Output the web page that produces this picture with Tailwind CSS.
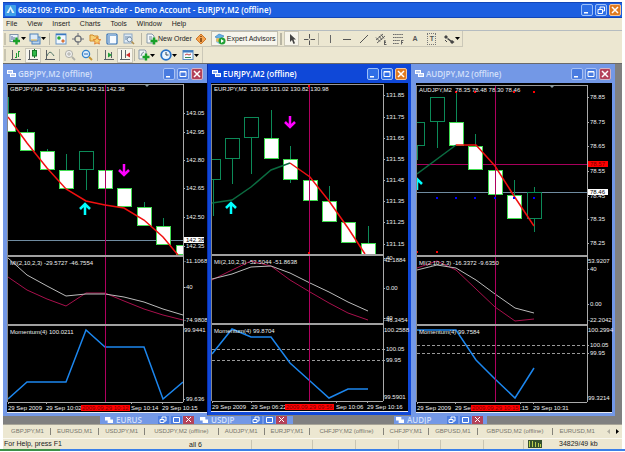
<!DOCTYPE html>
<html lang="en">
<head>
  <meta charset="UTF-8">
  <title>6682109: FXDD - MetaTrader - Demo Account - EURJPY,M2 (offline)</title>
  <meta name="viewport" content="width=device-width, initial-scale=1.0">
  <script src="https://cdn.jsdelivr.net/npm/@tailwindcss/browser@4"></script>
</head>
<body class="bg-white font-['Liberation_Sans',Arial,sans-serif] text-[7px] leading-[10px] text-[#222] overflow-hidden">
  <div class="flex flex-col pt-[2px] pl-[3px] pr-[3px]">

    <!-- title bar -->
    <header class="flex items-center h-4 bg-[#1d5fe0] border-y border-[#1246b8] pl-[2px] pr-px">
      <svg class="w-[11px] h-[11px]" viewBox="0 0 11 11"><rect width="11" height="11" rx="1" fill="#3fa0e8"/><path d="M5.5 1 9.5 8h-8z" fill="#dff2ff"/><path d="M5.5 4 7 8H4z" fill="#3a8ad8"/></svg>
      <h1 class="ml-[2px] grow font-['Open_Sans',sans-serif] font-semibold text-[8px] text-white whitespace-nowrap">6682109: FXDD - MetaTrader - Demo Account - EURJPY,M2 (offline)</h1>
      <div class="flex gap-[2px]">
        <button aria-label="Minimize" class="w-3 h-3 rounded-xs border border-[#9dc0f8] bg-[#2f6fe6]"><svg viewBox="0 0 10 10"><path d="M2 7h4v1.500H2z" fill="#fff"/></svg></button>
        <button aria-label="Restore" class="w-3 h-3 rounded-xs border border-[#9dc0f8] bg-[#2f6fe6]"><svg viewBox="0 0 10 10" fill="none" stroke="#fff"><path d="M4 4V2h4.500v4H7M2 4.500h4.500v4H2z"/></svg></button>
        <button aria-label="Close" class="w-3 h-3 rounded-xs border border-[#f4c79c] bg-[#e07a20]"><svg viewBox="0 0 10 10" stroke="#fff" stroke-width="1.500"><path d="M2 2l6 6M8 2 2 8"/></svg></button>
      </div>
    </header>

    <!-- menu -->
    <nav class="flex items-center gap-[10px] h-3 pl-[3px] bg-[#ece7d1]">
      <a href="#">File</a><a href="#">View</a><a href="#">Insert</a><a href="#">Charts</a><a href="#">Tools</a><a href="#">Window</a><a href="#">Help</a>
    </nav>

    <div class="bg-[#ece7d1] border-t border-[#b5bcc0]">
      <!-- standard toolbar + line studies -->
      <div class="flex items-center h-4 w-max border-r border-b border-[#cbc8b8]">
        <span class="w-[2px] h-3 mx-px border-x border-[#c8c4b0]"></span>
        <button aria-label="New chart" class="flex items-center w-5 pl-[2px]">
          <svg class="w-3 h-3" viewBox="0 0 12 12"><rect x="1" y="1.500" width="8" height="7" fill="#eaf4fb" stroke="#7d93a8"/><path d="M3 3v4M5 4v3" stroke="#569"/><path d="M7.500 4.500v7M4 8h7" stroke="#18a028" stroke-width="2.400"/></svg>
          <svg class="w-[5px] h-[3px]" viewBox="0 0 5 3"><path d="M0 0h5L2.500 3z"/></svg>
        </button>
        <button aria-label="Profiles" class="flex items-center w-5 pl-[2px]">
          <svg class="w-3 h-3" viewBox="0 0 12 12"><rect x="3" y="4" width="8" height="7" fill="#b8d4f0" stroke="#4f81b8"/><rect x="1" y="1" width="8" height="7" fill="#dceaf8" stroke="#4f81b8"/><path d="M2 7h6" stroke="#e0b040"/></svg>
          <svg class="w-[5px] h-[3px]" viewBox="0 0 5 3"><path d="M0 0h5L2.500 3z"/></svg>
        </button>
        <span class="w-px h-3 mx-[2px] bg-[#b8b5a4]"></span>
        <button aria-label="Market Watch" class="flex justify-center w-[17px]"><svg class="w-3 h-3" viewBox="0 0 12 12"><rect x="1" y="1" width="10" height="10" fill="#f2f8ff" stroke="#6a97c8"/><path d="M1 1.500h10" stroke="#3b78c0" stroke-width="1.500"/><circle cx="4" cy="5" r="1.800" fill="#27a535"/><path d="M8 6l2 2-2 2-2-2z" fill="#d8743a"/></svg></button>
        <button aria-label="Data Window" class="flex justify-center w-[17px]"><svg class="w-3 h-3" viewBox="0 0 12 12" fill="none" stroke="#6c7078"><circle cx="6" cy="6" r="3.200" stroke-width="1.200"/><path d="M6 0v4M6 8v4M0 6h4M8 6h4"/></svg></button>
        <button aria-label="Navigator" class="flex justify-center w-[17px]"><svg class="w-3 h-3" viewBox="0 0 12 12"><path d="M1 2h3l1 1h4v5H1z" fill="#f6cf76" stroke="#d08a28"/><path d="M8 4l1.200 2.400 2.600.3-1.900 1.800.5 2.600L8 9.900l-2.400 1.200.5-2.600-1.900-1.800 2.600-.3z" fill="#f8d070" stroke="#dc7020" stroke-width=".8"/></svg></button>
        <button aria-label="Terminal" class="flex justify-center w-[17px]"><svg class="w-3 h-3" viewBox="0 0 12 12"><rect x="1" y="1" width="10" height="10" rx="1" fill="#f7fbff" stroke="#2f6eb4" stroke-width="1.200"/><path d="M3 2v8" stroke="#2f6eb4"/><path d="M4 2.500h6" stroke="#8bb4dc"/></svg></button>
        <button aria-label="Strategy Tester" class="flex justify-center w-[17px]"><svg class="w-3 h-3" viewBox="0 0 12 12" fill="none"><rect x="1" y="1" width="8" height="9" fill="#dfeaf4" stroke="#8ca8c4"/><path d="M3 3v4M5 3v3M7 3v2" stroke="#6688a8"/><circle cx="6.500" cy="6.500" r="2.300" fill="#e8f4ff" stroke="#8095ac"/><path d="M8.500 8.500 11 11" stroke="#b09050" stroke-width="1.600"/></svg></button>
        <span class="w-px h-3 mx-[4px] bg-[#b8b5a4]"></span>
        <button class="flex items-center whitespace-nowrap">
          <svg class="w-3 h-3" viewBox="0 0 12 12"><path d="M1 1h5l2 2v7H1z" fill="#f4f8fa" stroke="#8798a8"/><path d="M3 4h3M3 6h3" stroke="#789"/><path d="M8 4.500v7M4.500 8h7" stroke="#18a028" stroke-width="2.600"/></svg>
          New Order</button>
        <button aria-label="MetaEditor" class="flex justify-center w-[18px]"><svg class="w-3 h-3" viewBox="0 0 12 12"><path d="M6 1l5 5-5 5-5-5z" fill="#f3a552" stroke="#d0782a"/><path d="M6 3v1M6 5v4" stroke="#7a3c08" stroke-width="1.500"/></svg></button>
        <button class="flex items-center gap-px h-[15px] px-[2px] ml-px bg-[#f7f5ec] border border-[#c2bfb0] whitespace-nowrap">
          <svg class="w-3 h-3" viewBox="0 0 12 12"><path d="M1 4 5 1l5 2-4 3z" fill="#69b1e6" stroke="#2c78b8" stroke-width=".6"/><path d="M2 5v4l3 2V6z" fill="#8cc8ee"/><circle cx="4" cy="7" r="2" fill="#e8b858"/><circle cx="8" cy="8" r="3.500" fill="#20a034"/><path d="M7 6l3 2-3 2z" fill="#fff"/></svg>
          Expert Advisors</button>
        <span class="w-[2px] h-3 mx-[2px] border-x border-[#b8b5a4]"></span>
        <button aria-label="Cursor" class="flex justify-center w-[15px] h-[15px] items-center bg-[#f7f5ec] border border-[#cbc8b8]"><svg class="w-3 h-3" viewBox="0 0 12 12"><path d="M4 1v8l2-2 1.500 4 1.500-.7L7.500 6.500H10z" fill="#444"/></svg></button>
        <button aria-label="Crosshair" class="flex justify-center w-[19px]"><svg class="w-3 h-3" viewBox="0 0 12 12"><path d="M6.500 1v4.500m0 2V12M1 6.500h4.500m2 0H12" stroke="#555"/></svg></button>
        <span class="w-px h-3 mr-[2px] bg-[#b8b5a4]"></span>
        <button aria-label="Vertical line" class="flex justify-center w-[17px]"><svg class="w-3 h-3" viewBox="0 0 12 12"><path d="M6.500 2v8" stroke="#666"/></svg></button>
        <button aria-label="Horizontal line" class="flex justify-center w-[17px]"><svg class="w-3 h-3" viewBox="0 0 12 12"><path d="M2 6.500h8" stroke="#555"/></svg></button>
        <button aria-label="Trendline" class="flex justify-center w-[17px]"><svg class="w-3 h-3" viewBox="0 0 12 12"><path d="M2 10l8-8" stroke="#555"/></svg></button>
        <button aria-label="Equidistant channel" class="flex justify-center w-[17px]"><svg class="w-3 h-3" viewBox="0 0 12 12" fill="none" stroke="#555"><path d="M1 7l7-6M2 10l8-7M1 4.500l4 4M4 3l3 4M6 1.500l3 4M9.500 7.500v4M9 8h2M9 9.500h2M9 11.500h2.500" stroke-width=".9"/></svg></button>
        <button aria-label="Fibonacci" class="flex justify-center w-[17px]"><svg class="w-3 h-3" viewBox="0 0 12 12" stroke="#666" fill="none"><path d="M1 1.500h10M1 4.500h10M1 7.500h7M1 10.500h6" stroke-dasharray="1.500 .6"/><path d="M9.500 7v4.500M9.500 7.500h2M9.500 9.500H11"/></svg></button>
        <button aria-label="Text" class="w-[17px] font-bold text-[#555]">A</button>
        <button aria-label="Text label" class="w-[17px] flex justify-center"><span class="w-[9px] border border-dotted border-[#777] text-[#555] font-bold">T</span></button>
        <button aria-label="Arrows" class="flex items-center w-[22px] pl-[3px]">
          <svg class="w-3 h-3" viewBox="0 0 12 12" fill="#444"><path d="M1 4l2-2 2 2-2 2zM5 5l4 3-1 1-4-3zM7 9l2-2 2.500 2L9 11z"/><path d="M2 7l2 2" stroke="#444"/></svg>
          <svg class="w-[5px] h-[3px]" viewBox="0 0 5 3"><path d="M0 0h5L2.500 3z"/></svg>
        </button>
      </div>

      <!-- chart toolbar -->
      <div class="flex items-center h-4 w-max border-r border-[#cbc8b8]">
        <span class="w-[2px] h-3 mx-px border-x border-[#c8c4b0]"></span>
        <button aria-label="Bar chart" class="flex justify-center w-[18px]"><svg class="w-3 h-3" viewBox="0 0 12 12" fill="none" stroke="#5a5f64"><path d="M2.500 1v9.500H11M1 10.500h2"/><path d="M6.500 4v5M5 8.500h1.500M8.500 2v6M8.500 2.500H10" stroke="#1c9a34"/></svg></button>
        <button aria-label="Candlesticks" class="flex justify-center items-center w-[16px] h-[15px] bg-[#f7f5ec] border border-[#cbc8b8]"><svg class="w-3 h-3" viewBox="0 0 12 12" fill="none" stroke="#5a5f64"><path d="M2.500 1v9.500H11M1 10.500h2"/><path d="M7.500 0v9" stroke="#157a28"/><rect x="5.500" y="1.500" width="4" height="5.500" fill="#30b848" stroke="#157a28"/></svg></button>
        <button aria-label="Line chart" class="flex justify-center w-[17px]"><svg class="w-3 h-3" viewBox="0 0 12 12" fill="none" stroke="#5a5f64"><path d="M2.500 1v9.500H11M1 10.500h2"/><path d="M3 7q2-5 4-3.500T10 7" stroke="#55786a"/></svg></button>
        <span class="w-px h-3 mx-px bg-[#b8b5a4]"></span>
        <button aria-label="Zoom in" class="flex justify-center w-[17px]"><svg class="w-3 h-3" viewBox="0 0 12 12" fill="none" stroke="#b0b0a8"><circle cx="5" cy="5" r="3.600" fill="#eee"/><path d="M3 5h4M5 3v4"/><path d="M8 8l3 3" stroke-width="1.800"/></svg></button>
        <button aria-label="Zoom out" class="flex justify-center w-[17px]"><svg class="w-3 h-3" viewBox="0 0 12 12" fill="none"><circle cx="5" cy="5" r="3.600" fill="#dff0ff" stroke="#3484cc" stroke-width="1.300"/><path d="M3 5h4" stroke="#2868b0"/><path d="M8 8l3 3" stroke="#c89838" stroke-width="2"/></svg></button>
        <span class="w-px h-3 mx-[2px] bg-[#b8b5a4]"></span>
        <button aria-label="Auto scroll" class="flex justify-center w-[17px]"><svg class="w-3 h-3" viewBox="0 0 12 12" fill="none" stroke="#5a5f64"><path d="M2.500 1v9.500H11M1 10.500h2M8.500 3v6"/><path d="M5 3.500l4 2.500-4 2.500z" fill="#22a03a" stroke="none"/></svg></button>
        <button aria-label="Chart shift" class="flex justify-center items-center w-[16px] h-[15px] bg-[#f7f5ec] border border-[#cbc8b8]"><svg class="w-3 h-3" viewBox="0 0 12 12" fill="none" stroke="#5a5f64"><path d="M2.500 1v9.500H11M1 10.500h2M6.500 1v8"/><path d="M11 3.500v5L7 6z" fill="#d02828" stroke="none"/></svg></button>
        <span class="w-px h-3 mx-px bg-[#b8b5a4]"></span>
        <button aria-label="Indicators" class="flex items-center w-[22px] pl-[2px]">
          <svg class="w-3 h-3" viewBox="0 0 12 12"><path d="M1 1h6l1 1v8H1z" fill="#f0f4f6" stroke="#8798a8"/><path d="M3 7q1-4 3-4" stroke="#789" fill="none"/><path d="M8 4.500v7M4.500 8h7" stroke="#18a028" stroke-width="2.400"/></svg>
          <svg class="w-[5px] h-[3px]" viewBox="0 0 5 3"><path d="M0 0h5L2.500 3z"/></svg>
        </button>
        <button aria-label="Periods" class="flex items-center w-[22px] pl-[2px]">
          <svg class="w-3 h-3" viewBox="0 0 12 12" fill="none"><circle cx="6" cy="6" r="4.800" fill="#eaf5ff" stroke="#2772c8" stroke-width="1.800"/><path d="M6 3v3h2.500" stroke="#345"/></svg>
          <svg class="w-[5px] h-[3px]" viewBox="0 0 5 3"><path d="M0 0h5L2.500 3z"/></svg>
        </button>
        <button aria-label="Templates" class="flex items-center w-[22px] pl-[2px]">
          <svg class="w-3 h-3" viewBox="0 0 12 12" fill="none"><rect x="1" y="1.500" width="10" height="9" fill="#f4faff" stroke="#5a8cc0"/><path d="M1 2.500h10" stroke="#3f7cc0" stroke-width="2"/><path d="M3 6l2-1 2 1 2-1" stroke="#c04040"/><path d="M3 8.500h6" stroke="#3a8a50"/></svg>
          <svg class="w-[5px] h-[3px]" viewBox="0 0 5 3"><path d="M0 0h5L2.500 3z"/></svg>
        </button>
      </div>
    </div>

    <!-- MDI workspace -->
    <main class="bg-[#808080] border-t border-[#6a6a6a] pr-[7px]">
      <div class="grid grid-cols-3 items-start">
        <section class="bg-[#7398e6] pl-1 pb-[3px]">
          <div class="flex items-center h-[19px] text-[#d4e0fa] pr-1">
            <svg class="w-[9px] h-[9px]" viewBox="0 0 9 9"><path d="M0 1h6v4H0zM3 4h6v4H3z" fill="#fff"/><path d="M1 3h4M4 6h4" stroke="#7398e6"/></svg>
            <h2 class="ml-[2px] grow font-['Open_Sans',sans-serif] font-semibold text-[8px]">GBPJPY,M2 (offline)</h2>
            <div class="flex gap-[2px]">
              <button aria-label="Minimize" class="w-3 h-3 rounded-xs border border-[#a9c2f4] bg-[#4a7ce0]"><svg viewBox="0 0 10 10"><path d="M2 7h4v1.500H2z" fill="#fff"/></svg></button>
              <button aria-label="Maximize" class="w-3 h-3 rounded-xs border border-[#a9c2f4] bg-[#4a7ce0]"><svg viewBox="0 0 10 10" fill="none" stroke="#fff"><path d="M2 2.500h6v5H2zM2 3h6"/></svg></button>
              <button aria-label="Close" class="w-3 h-3 rounded-xs border border-[#d4b4c4] bg-[#b4425a]"><svg viewBox="0 0 10 10" stroke="#fff" stroke-width="1.500"><path d="M2 2l6 6M8 2 2 8"/></svg></button>
            </div>
          </div>
          <svg id="gbpjpy" class="block w-full overflow-visible" viewBox="7 83 200 330"></svg>
        </section>

        <section class="bg-[#0f48d8] px-1 pb-[3px] border-l border-[#0a2fae]">
          <div class="flex items-center h-[19px] text-white">
            <svg class="w-[9px] h-[9px]" viewBox="0 0 9 9"><path d="M0 1h6v4H0zM3 4h6v4H3z" fill="#fff"/><path d="M1 3h4M4 6h4" stroke="#1558e0"/></svg>
            <h2 class="ml-[2px] grow font-['Open_Sans',sans-serif] font-semibold text-[8px]">EURJPY,M2 (offline)</h2>
            <div class="flex gap-[2px]">
              <button aria-label="Minimize" class="w-3 h-3 rounded-xs border border-[#9dc0f8] bg-[#2f6fe6]"><svg viewBox="0 0 10 10"><path d="M2 7h4v1.500H2z" fill="#fff"/></svg></button>
              <button aria-label="Maximize" class="w-3 h-3 rounded-xs border border-[#9dc0f8] bg-[#2f6fe6]"><svg viewBox="0 0 10 10" fill="none" stroke="#fff"><path d="M2 2.500h6v5H2zM2 3h6"/></svg></button>
              <button aria-label="Close" class="w-3 h-3 rounded-xs border border-[#f4c79c] bg-[#e07a20]"><svg viewBox="0 0 10 10" stroke="#fff" stroke-width="1.500"><path d="M2 2l6 6M8 2 2 8"/></svg></button>
            </div>
          </div>
          <svg id="eurjpy" class="block w-full overflow-visible" viewBox="212 83 195 329"></svg>
        </section>

        <section class="bg-[#7398e6] px-1 pb-[3px]">
          <div class="flex items-center h-[19px] text-[#d4e0fa]">
            <svg class="w-[9px] h-[9px]" viewBox="0 0 9 9"><path d="M0 1h6v4H0zM3 4h6v4H3z" fill="#fff"/><path d="M1 3h4M4 6h4" stroke="#7398e6"/></svg>
            <h2 class="ml-[2px] grow font-['Open_Sans',sans-serif] font-semibold text-[8px]">AUDJPY,M2 (offline)</h2>
            <div class="flex gap-[2px]">
              <button aria-label="Minimize" class="w-3 h-3 rounded-xs border border-[#a9c2f4] bg-[#4a7ce0]"><svg viewBox="0 0 10 10"><path d="M2 7h4v1.500H2z" fill="#fff"/></svg></button>
              <button aria-label="Maximize" class="w-3 h-3 rounded-xs border border-[#a9c2f4] bg-[#4a7ce0]"><svg viewBox="0 0 10 10" fill="none" stroke="#fff"><path d="M2 2.500h6v5H2zM2 3h6"/></svg></button>
              <button aria-label="Close" class="w-3 h-3 rounded-xs border border-[#d4b4c4] bg-[#b4425a]"><svg viewBox="0 0 10 10" stroke="#fff" stroke-width="1.500"><path d="M2 2l6 6M8 2 2 8"/></svg></button>
            </div>
          </div>
          <svg id="audjpy" class="block w-full overflow-visible" viewBox="415 83 196 330"></svg>
        </section>
      </div>

      <!-- minimized windows, cut off by the workspace edge -->
      <div class="flex h-2 overflow-hidden pl-[97px] font-['Open_Sans',sans-serif] font-semibold text-[8px] leading-[8px] text-[#d4e0fa]">
        <div class="flex w-[97px] bg-[#7398e6] pl-[5px]">
          <svg class="w-[8px] h-[8px]" viewBox="0 0 9 9"><path d="M0 1h6v4H0zM3 4h6v4H3z" fill="#fff"/></svg><span class="ml-[3px] w-[42px]">EURUS</span>
          <svg class="w-[36px] h-[8px]" viewBox="0 0 36 8"><path d="M0 0h11v8H0zM13 0h11v8H13z" fill="#4a7ce0"/><path d="M25 0h11v8H25z" fill="#b4425a"/><path d="M4 3V1h4v4H6M2 3.500h4v3H2zM15.500 1.500h6v5h-6zM28 1l5 5M33 1l-5 5" fill="none" stroke="#fff"/></svg>
        </div>
        <div class="flex w-[96px] bg-[#7398e6] pl-[3px]">
          <svg class="w-[8px] h-[8px]" viewBox="0 0 9 9"><path d="M0 1h6v4H0zM3 4h6v4H3z" fill="#fff"/></svg><span class="ml-[3px] w-[40px]">USDJP</span>
          <svg class="w-[36px] h-[8px]" viewBox="0 0 36 8"><path d="M0 0h11v8H0zM13 0h11v8H13z" fill="#4a7ce0"/><path d="M25 0h11v8H25z" fill="#b4425a"/><path d="M4 3V1h4v4H6M2 3.500h4v3H2zM15.500 1.500h6v5h-6zM28 1l5 5M33 1l-5 5" fill="none" stroke="#fff"/></svg>
        </div>
        <div class="flex w-[93px] ml-[101px] bg-[#7398e6] pl-[2px]">
          <svg class="w-[8px] h-[8px]" viewBox="0 0 9 9"><path d="M0 1h6v4H0zM3 4h6v4H3z" fill="#fff"/></svg><span class="ml-[3px] w-[40px]">AUDJP</span>
          <svg class="w-[36px] h-[8px]" viewBox="0 0 36 8"><path d="M0 0h11v8H0zM13 0h11v8H13z" fill="#4a7ce0"/><path d="M25 0h11v8H25z" fill="#b4425a"/><path d="M4 3V1h4v4H6M2 3.500h4v3H2zM15.500 1.500h6v5h-6zM28 1l5 5M33 1l-5 5" fill="none" stroke="#fff"/></svg>
        </div>
      </div>
    </main>

    <!-- chart tabs -->
    <div class="flex items-center h-[14px] bg-[#ece7d1] border-t border-[#a8a598] pl-[2px] text-[6px] text-[#77756c] whitespace-nowrap">
      <button class="px-[6px] border-r border-[#85837a] leading-[7px]">GBPJPY,M1</button>
      <button class="px-[6px] border-r border-[#85837a] leading-[7px]">EURUSD,M1</button>
      <button class="px-[6px] border-r border-[#85837a] leading-[7px]">USDJPY,M1</button>
      <button class="px-[9px] border-r border-[#85837a] leading-[7px]">USDJPY,M2 (offline)</button>
      <button class="px-[6px] border-r border-[#85837a] leading-[7px]">AUDJPY,M1</button>
      <button class="px-[6px] border-r border-[#85837a] leading-[7px]">EURJPY,M1</button>
      <button class="px-[9px] border-r border-[#85837a] leading-[7px]">CHFJPY,M2 (offline)</button>
      <button class="px-[6px] border-r border-[#85837a] leading-[7px]">CHFJPY,M1</button>
      <button class="px-[6px] border-r border-[#85837a] leading-[7px]">GBPUSD,M1</button>
      <button class="px-[9px] border-r border-[#85837a] leading-[7px]">GBPUSD,M2 (offline)</button>
      <button class="px-[6px] leading-[7px]">EURUSD,M1</button>
      <button aria-label="Scroll tabs left" class="ml-auto mr-[6px]"><svg class="w-[3px] h-[5px]" viewBox="0 0 3 5"><path d="M3 0v5L0 2.500z" fill="#b0ada0"/></svg></button>
      <button aria-label="Scroll tabs right" class="mr-[3px]"><svg class="w-[3px] h-[5px]" viewBox="0 0 3 5"><path d="M0 0v5l3-2.500z"/></svg></button>
    </div>

    <!-- status bar -->
    <footer class="flex items-center h-[11px] bg-[#ece7d1] border-t border-[#faf8f0] pl-px">
      <span class="w-[183px]">For Help, press F1</span>
      <span class="w-[65px] border-r border-[#c9c5b2] pl-[2px] leading-[9px]">all 6</span>
      <span class="w-[61px] h-[9px] border-r border-[#c9c5b2]"></span>
      <span class="w-[43px] h-[9px] border-r border-[#c9c5b2]"></span>
      <span class="w-[43px] h-[9px] border-r border-[#c9c5b2]"></span>
      <span class="w-[42px] h-[9px] border-r border-[#c9c5b2]"></span>
      <span class="w-[43px] h-[9px] border-r border-[#c9c5b2]"></span>
      <span class="w-[40px] h-[9px] border-r border-[#c9c5b2]"></span>
      <svg class="w-[15px] h-[8px] ml-[4px]" viewBox="0 0 15 8"><path d="M0 0h14v8H0z" fill="#34502c"/><path d="M1.500 1v6M4.500 1v6M7.500 2v5M10.500 3v4M12.500 4v3" stroke="#b8cc50"/></svg>
      <span class="ml-4 whitespace-nowrap">34829/49 kb</span>
    </footer>
  </div>
  <div class="flex h-[2px]"><span class="w-[60px] bg-[#3c9048]"></span><span class="grow bg-[#3a80e8]"></span></div>

  <script>
    // candle: [centre x, body top, body bottom, wick top, wick bottom, 1 = bull (hollow)]
    const charts = {
      gbpjpy: {
        left: 8, right: 183, top: 84, bottom: 402, panes: [256, 325], end: 207, base: 413,
        title: "GBPJPY,M2  142.35 142.41 142.31 142.38", mi: "MI(2,10,2,3) -29.5727 -46.7554", mom: "Momentum(4) 100.0211",
        candles: [[8,113,132,97,132,0],[27,132,151,129,151,0],[47,151,170,149,170,0],[66,170,189,154,189,0],[86,151,170,151,190,1],[105,170,189,170,189,0],[124,188,207,188,207,0],[144,207,226,202,226,0],[163,226,245,218,245,0],[183,245,255,229,255,0]],
        maUp: "", maDown: "8,117 27,143 47,168 66,189 86,201 105,205 124,208 144,220 163,237 178,255",
        arrows: [[85,202,"up"],[124,177,"down"]],
        vline: 105, hlines: [[240,"#6f8ba0"]], dots: [], marker: 147,
        labels: [["143.05",113],["142.95",132],["142.80",160],["142.65",188],["142.50",217],["142.35",246],["-11.1068",261],["-40",287],["-74.9808",320],["99.9441",330],["99.636",399]],
        tags: [["142.38",240,"#fff","#000"]],
        miWhite: "8,258 27,275 47,286 66,296 86,294 105,294 124,297 144,302 163,309 183,315",
        miRed: "8,277 27,290 47,299 66,306 86,293 105,293 124,301 144,309 163,315 183,320",
        momLine: "8,399 27,382 66,382 86,330 105,347 144,347 163,399 183,382", dashes: [],
        times: [["29 Sep 2009",8],["29 Sep 10:02",46],["Sep 10:14",131],["29 Sep 10:15",162]], timeTag: ["2009.09.29 10:12",81]
      },
      eurjpy: {
        left: 212, right: 383, top: 84, bottom: 401, panes: [255, 324], end: 408, base: 412,
        title: "EURJPY,M2  130.85 131.02 130.82 130.98", mi: "MI(2,10,2,3) -52.5044 -51.8638", mom: "Momentum(4) 99.8704",
        candles: [[213,159,180,159,216,1],[232,138,159,138,184,1],[251,117,138,117,174,1],[271,138,159,110,159,0],[290,159,180,146,183,0],[310,180,201,180,201,0],[329,201,222,186,222,0],[348,222,243,222,243,0],[368,243,255,226,255,0]],
        maUp: "212,203 232,200 251,187 271,170 290,163", maDown: "290,163 310,177 329,201 348,228 365,254",
        arrows: [[231,201,"up"],[290,129,"down"]],
        vline: 309, hlines: [], dots: [[309,86,"#f00"],[309,253,"#f00"]], marker: 0,
        labels: [["131.85",95],["131.75",117],["131.65",138],["131.55",159],["131.45",180],["131.35",201],["131.25",222],["131.15",244],["42.1884",260],["40",258],["0.00",288],["-46.3454",320],["-40",318],["100.2588",330],["100.05",349],["99.95",360],["99.5901",397]],
        tags: [],
        miWhite: "212,279 232,274 251,267 271,266 290,273 310,283 329,292 348,302 368,311",
        miRed: "212,280 232,270 251,261 271,266 290,280 310,292 329,303 348,313 368,320",
        momLine: "212,354 232,329 251,337 271,337 290,363 310,381 329,398 348,389 368,389", dashes: [349, 360],
        times: [["29 Sep 2009",212],["29 Sep 06:22",251],["Sep 10:06",336],["29 Sep 10:16",367]], timeTag: ["2009.09.29 09:56",285]
      },
      audjpy: {
        left: 417, right: 587, top: 85, bottom: 402, panes: [256, 325], end: 612, base: 413,
        title: "AUDJPY,M2  78.35 78.48 78.30 78.46", mi: "MI(2,10,2,3) -16.3372 -9.6350", mom: "Momentum(4) 99.7584",
        candles: [[417,122,146,122,160,1],[437,97,122,97,148,1],[456,122,146,92,146,0],[475,146,170,134,170,0],[495,170,195,170,195,0],[514,195,219,180,219,0],[534,192,219,187,232,1]],
        maUp: "417,174 456,145", maDown: "456,145 476,145 495,166 514,196 534,226",
        arrows: [[417,177,"up"]],
        vline: 495, hlines: [[164,"#a8005c"],[192,"#6f8ba0"]], marker: 552,
        dots: [[456,92,"#f00"],[475,92,"#f00"],[514,92,"#f00"],[534,92,"#f00"],[417,252,"#f00"],[437,252,"#f00"],[437,198,"#00f"],[456,198,"#00f"],[475,198,"#00f"],[495,198,"#00f"],[514,198,"#00f"],[534,198,"#00f"]],
        labels: [["78.85",97],["78.75",122],["78.65",146],["78.55",171],["78.45",196],["78.35",219],["78.25",243],["53.9207",261],["40",269],["0.00",304],["-22.2042",320],["100.2994",330],["100.05",345],["99.95",353],["99.3214",398]],
        tags: [["78.57",164,"#f00","#700"],["78.46",192,"#fff","#000"]],
        miWhite: "417,270 437,265 456,268 476,280 495,294 515,308 534,313",
        miRed: "417,268 437,261 456,270 476,289 495,307 515,321 534,319",
        momLine: "417,330 456,330 476,360 495,379 515,398 534,368", dashes: [345, 353],
        times: [["29 Sep 2009",417],["29 Sep",455],[":15",520],["29 Sep 10:31",533]], timeTag: ["2009.09.29 10:15",471]
      }
    };

    const line = (x1, y1, x2, y2, c, w = 1) => `<path d="M${x1} ${y1}L${x2} ${y2}" stroke="${c}" stroke-width="${w}"/>`;
    const rect = (x, y, w, h, c) => `<rect x="${x}" y="${y}" width="${w}" height="${h}" fill="${c}"/>`;
    const poly = (p, c, w = 1) => `<polyline points="${p}" fill="none" stroke="${c}" stroke-width="${w}"/>`;
    const text = (s, x, y, c = "#eee") => `<text x="${x}" y="${y}" fill="${c}" font-size="6" xml:space="preserve">${s}</text>`;

    for (const id in charts) {
      const c = charts[id];
      const width = c.right - c.left;
      let s = rect(c.left - 1, 83, c.end - c.left + 1, c.base - 83, "#000");
      s += `<clipPath id="clip-${id}"><rect x="${c.left}" y="${c.top}" width="${width}" height="${c.bottom - c.top}"/></clipPath>`;
      s += `<g clip-path="url(#clip-${id})">`;
      c.hlines.forEach(([y, col]) => s += line(c.left, y + .5, c.right, y + .5, col));
      c.dashes.forEach(y => s += `<path d="M${c.left} ${y}.5H${c.right}" stroke="#999" stroke-dasharray="3 2"/>`);
      c.candles.forEach(([x, t, b, wt, wb, bull]) => {
        const col = bull ? "#0c8a58" : "#3fdc50";
        s += line(x + .5, wt, x + .5, wb, "#0c8a58");
        s += `<rect x="${x - 7}.5" y="${t}.5" width="14" height="${b - t - 1}" fill="${bull ? "#000" : "#fff"}" stroke="${col}"/>`;
      });
      s += poly(c.miRed, "#a8104c") + poly(c.miWhite, "#bbb") + poly(c.momLine, "#1c86ee", 1.5);
      s += line(c.vline + .5, c.top, c.vline + .5, c.bottom, "#b0005f");
      s += poly(c.maUp, "#0b6b40", 1.5) + poly(c.maDown, "#f01010", 1.5);
      c.arrows.forEach(([x, y, dir]) => {
        const k = dir == "up" ? 1 : -1;
        s += `<path d="M${x} ${y + 13 * k}V${y + 2 * k}M${x - 5} ${y + 7 * k}L${x} ${y + 2 * k}L${x + 5} ${y + 7 * k}" fill="none" stroke="${dir == "up" ? "#0ff" : "#f0f"}" stroke-width="2.500"/>`;
      });
      c.dots.forEach(([x, y, col]) => s += rect(x - 1, y - 1, 2, 2, col));
      s += "</g>";
      // frame, pane dividers, price ticks
      s += line(c.left, c.top + .5, c.right, c.top + .5, "#999") + line(c.left - .5, c.top, c.left - .5, c.bottom, "#888");
      s += line(c.right + .5, c.top, c.right + .5, c.bottom, "#aaa") + line(c.left, c.bottom + .5, c.right, c.bottom + .5, "#aaa");
      c.panes.forEach(y => s += rect(c.left, y - 1, width, 2, "#a0a0a0"));
      if (c.marker) s += `<path d="M${c.marker - 3} ${c.top}h6l-3 3z" fill="#8c9aa0"/>`;
      s += text(c.title, c.left + 2, c.top + 7) + text(c.mi, c.left + 2, c.panes[0] + 9) + text(c.mom, c.left + 2, c.panes[1] + 9);
      // long values sit right against the axis
      c.labels.forEach(([t, y]) => {
        if (t.length < 7) s += line(c.right, y + .5, c.right + 2, y + .5, "#aaa");
        s += text(t, c.right + (t.length > 6 || t[0] == "-" ? 1 : 3), y + 2);
      });
      c.tags.forEach(([t, y, bg, fg]) => s += rect(c.right + 1, y - 3, 20, 6, bg) + text(t, c.right + 3, y + 2, fg));
      c.times.forEach(([t, x]) => s += text(t, x, c.bottom + 8) + line(x + .5, c.bottom, x + .5, c.bottom + 2, "#aaa"));
      s += rect(c.timeTag[1], c.bottom + 3, 49, 6, "#f00") + text(c.timeTag[0], c.timeTag[1] + 1, c.bottom + 8, "#700");
      s += rect(c.left - 1, c.base - 1, c.end - c.left + 1, 1, "#e8eaf0");
      document.getElementById(id).innerHTML = s;
    }
  </script>
</body>
</html>
